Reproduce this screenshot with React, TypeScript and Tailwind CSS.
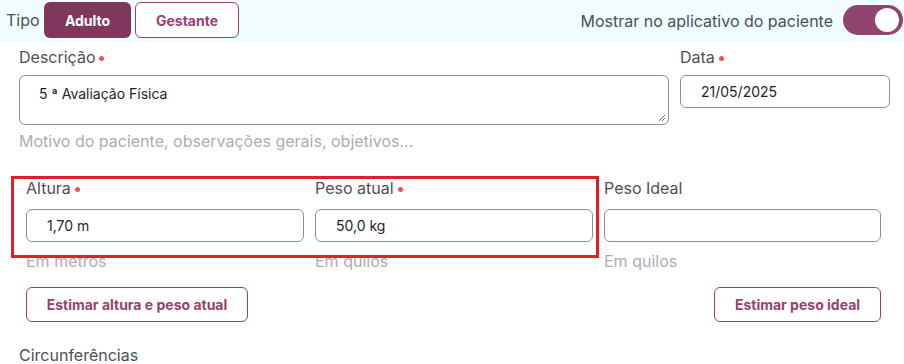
import React from "react";

const font = { fontFamily: "Inter, 'Noto Sans', sans-serif" };

function Label({ text, required }: { text: string; required?: boolean }) {
  return (
    <div className="flex items-center h-6 text-[16px] leading-6 text-[#4b5058]">
      <span>{text}</span>
      {required && <span className="ml-[4px] mt-[2px] w-[5px] h-[5px] rounded-full bg-[#f05252]" />}
    </div>
  );
}

function Field({ label, required, value, helper }: { label: string; required?: boolean; value: string; helper: string }) {
  return (
    <div className="flex flex-col">
      <Label text={label} required={required} />
      <div className="mt-[9px] h-[33px] border border-[#8b9099] rounded-[6px] flex items-center pl-[20px] text-[14px] text-[#1f2328]">
        {value}
      </div>
      <div className="mt-[7px] h-6 leading-6 text-[16px] text-[#a9aeb6]">{helper}</div>
    </div>
  );
}

export default function App() {
  return (
    <div className="w-[904px] h-[364px] bg-white overflow-hidden" style={font}>
      <div className="h-[42px] bg-[#f0fcfe] flex items-start pt-[2px] pl-[6px] pr-[1px]">
        <span className="w-[38px] shrink-0 text-[16px] leading-6 text-[#4b5058] mt-[6px]">Tipo</span>
        <button className="w-[87px] h-[36px] rounded-[6px] bg-[#7f375e] text-white text-[14px] font-bold">Adulto</button>
        <button className="ml-[4px] w-[104px] h-[36px] rounded-[6px] bg-white border border-[#9a4070] text-[#9a4070] text-[14px] font-bold">Gestante</button>
        <div className="flex-1" />
        <span className="text-[16px] leading-6 text-[#4b5058] mt-[7px] mr-[10px]">Mostrar no aplicativo do paciente</span>
        <div className="mt-[3px] w-[60px] h-[30px] rounded-full bg-[#91446f] relative">
          <div className="absolute right-[4px] top-[3px] w-[24px] h-[24px] rounded-full bg-white" />
        </div>
      </div>

      <div className="pl-[19px] pr-[14px] mt-[3px] flex gap-[11px]">
        <div className="w-[650px] flex flex-col">
          <Label text="Descrição" required />
          <div className="mt-[6px] h-[50px] border border-[#8b9099] rounded-[6px] pl-[19px] pt-[7px] text-[14px] text-[#1f2328] relative">
            5 ª Avaliação Física
            <svg className="absolute right-[2px] bottom-[2px]" width="8" height="8" viewBox="0 0 8 8">
              <path d="M7 1 L1 7 M7 4 L4 7" stroke="#6b7078" strokeWidth="1" />
            </svg>
          </div>
          <div className="mt-[4px] h-6 leading-6 text-[16px] text-[#a9aeb6]">Motivo do paciente, observações gerais, objetivos...</div>
        </div>
        <div className="w-[210px] flex flex-col">
          <Label text="Data" required />
          <div className="mt-[6px] h-[33px] border border-[#8b9099] rounded-[6px] flex items-center pl-[20px] text-[14px] text-[#1f2328]">
            21/05/2025
          </div>
        </div>
      </div>

      <div className="relative mt-[23px] pl-[26px] pr-[23px]">
        <div className="grid grid-cols-[278px_278px_277px] gap-[11px]">
          <Field label="Altura" required value="1,70 m" helper="Em metros" />
          <Field label="Peso atual" required value="50,0 kg" helper="Em quilos" />
          <Field label="Peso Ideal" value="" helper="Em quilos" />
        </div>
        <div className="absolute left-[11px] top-0 w-[588px] h-[82px] border-[3px] border-[#e41e26] pointer-events-none" />
        <div className="mt-[14px] flex justify-between">
          <button className="w-[222px] h-[35px] rounded-[6px] border border-[#9a4070] text-[#9a4070] text-[14px] font-bold">Estimar altura e peso atual</button>
          <button className="w-[167px] h-[35px] rounded-[6px] border border-[#9a4070] text-[#9a4070] text-[14px] font-bold">Estimar peso ideal</button>
        </div>
      </div>

      <div className="pl-[19px] mt-[21px] h-6 leading-6 text-[16px] text-[#4b5058]">Circunferências</div>
    </div>
  );
}
